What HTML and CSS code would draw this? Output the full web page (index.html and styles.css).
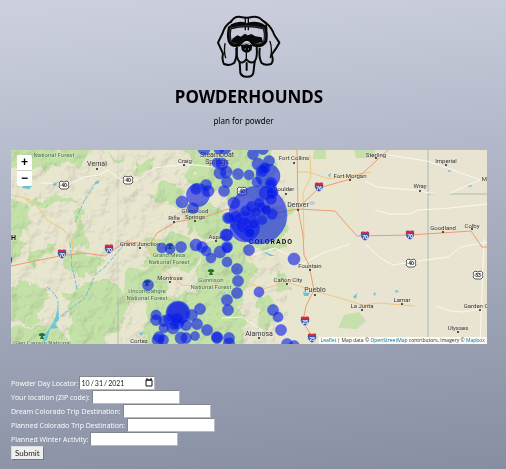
FILE: index.html
```html
<!DOCTYPE html>
<html lang="en">
<head>
<meta charset="utf-8">
<meta name="viewport" content="width=device-width, initial-scale=1">
<title>Powderhounds</title>
<link rel="stylesheet" href="styles.css">
</head>
<body>
<header class="masthead">
  <svg class="logo" viewBox="0 0 255 240" role="img" aria-label="Hound wearing ski goggles">
    <g fill="none" stroke="#080808" stroke-width="6" stroke-linecap="round" stroke-linejoin="round">
      <path d="M78 50Q90 32 107 36Q125 40 141 36Q160 33 172 46L184 55Q200 68 208 90L223 113Q213 132 200 149Q207 169 198 177Q180 183 169 173Q161 157 164 131"/>
      <path d="M78 50Q60 61 53 84L39 113L54 146Q50 164 57 177Q75 184 88 173Q97 154 94 131"/>
      <path d="M60 116Q56 142 62 158M195 109Q203 134 196 158" stroke-width="4"/>
      <path d="M96 128Q92 158 103 170Q113 178 124 163Q137 178 149 169Q158 157 155 128"/>
      <path d="M104 172L106 204Q111 216 126 215Q142 216 145 204L149 170M125 174V195"/>
      <path d="M124 145V164M121 39V74M130 39V74" stroke-width="4"/>
      <path d="M80 61Q101 49 121 56M130 56Q157 49 177 63" stroke-width="7"/>
      <path d="M75 68Q125 54 178 68Q185 84 181 108Q170 126 147 119Q137 101 125 101Q112 102 102 119Q82 124 74 108Q69 86 75 68Z" stroke-width="12"/>
      <path d="M76 69Q125 56 177 69Q183 86 178 107Q166 121 149 114Q137 96 125 97Q112 98 101 114Q84 120 76 107Q72 88 76 69Z" stroke="#8a8e99" stroke-width="1"/>
    </g>
    <path fill="#080808" d="M172 44L184 51L188 75L177 66L182 59ZM82 101L97 91L108 95L119 86L128 91L139 87L151 94L170 97L174 110L150 116L136 101L117 100L100 116L80 112ZM108 121Q125 108 142 121L140 134Q125 153 110 135Z"/>
    <path fill="none" stroke="#b9beca" stroke-width="3" d="M108 92L121 83L130 88L138 85M115 119Q125 112 135 119M119 132H122M129 132H132"/>
  </svg>
  <h1 class="brand">POWDERHOUNDS</h1>
  <p class="tagline">plan for powder</p>
</header>

<main class="content">
  <section class="map" aria-label="Colorado snow map">
    <svg class="map-canvas" viewBox="11 150 476 194" preserveAspectRatio="xMidYMid slice">
      <defs>
        <filter id="rough" x="-10%" y="-10%" width="120%" height="120%" color-interpolation-filters="sRGB">
          <feTurbulence type="fractalNoise" baseFrequency="0.06" numOctaves="4" seed="8" result="n"/>
          <feDisplacementMap in="SourceGraphic" in2="n" scale="22" xChannelSelector="R" yChannelSelector="G"/>
        </filter>
        <filter id="relief" x="0" y="0" width="100%" height="100%" color-interpolation-filters="sRGB">
          <feTurbulence type="fractalNoise" baseFrequency="0.07" numOctaves="4" seed="3" result="n"/>
          <feDiffuseLighting in="n" surfaceScale="4" diffuseConstant="1.3" lighting-color="#fff" result="l"><feDistantLight azimuth="225" elevation="50"/></feDiffuseLighting>
          <feComposite in="l" in2="SourceGraphic" operator="in"/>
        </filter>
        <g id="interstate">
          <path d="M-4-4Q-2-5 0-4Q2-5 4-4Q6 2 0 5Q-6 2-4-4Z" fill="#3c50a4" stroke="#e9e8ed" stroke-width=".6"/>
          <path d="M-4-4Q-2-5 0-4Q2-5 4-4L4-2H-4Z" fill="#d22c37"/>
        </g>
        <path id="shield" d="M-3-4L0-3L3-4L5-2Q3 0 5 2L3 4H-3L-5 2Q-3 0-5-2Z" fill="#fff" stroke="#333" stroke-width=".8"/>
        <path id="tree" d="M-1 0Q-4 0-3-2Q0-4 3-2Q4 0 1 0L2 3H-2Z" fill="#23733a"/>
      </defs>
      <rect x="11" y="150" width="476" height="194" fill="#e9e6d0"/>
      <path d="M360 150H487V344H350Z" fill="#e9e2d3" opacity=".6"/>
      <g fill="#c4e1a8" filter="url(#rough)">
        <path d="M5 145H95L80 165L60 162L45 172L30 170L5 165ZM25 202L45 196L78 198L68 205L32 206ZM5 195L24 206L30 228L22 250L5 262ZM75 212L86 220L84 245L72 252ZM38 247L58 240L48 258L36 268L26 262ZM60 258L90 252L104 262L85 277L62 270ZM5 285L45 282L48 304L32 322L5 325ZM64 292L98 278L126 288L128 315L104 350H60L75 320ZM5 330L52 320L70 350H5Z"/>
        <path d="M135 158L150 154L152 172L138 176ZM182 145H272L276 175L264 192L234 204L218 190L196 194L188 170ZM150 196L166 180L184 190L178 206ZM182 204L216 201L236 220L226 240L190 233ZM145 240L192 236L208 252L186 272L148 268ZM208 240L248 238L254 265L244 300L228 316L202 302L194 274ZM126 270L160 266L172 290L153 306L128 302ZM156 300L216 286L244 313L236 350H146L142 322Z"/>
        <path d="M105 156L124 155L120 161ZM250 200L287 208L285 245L268 252L250 242ZM258 290L270 298L278 317L268 326ZM275 272L286 276L288 290L278 294Z"/>
      </g>
      <g fill="#c7dfad">
        <path d="M314 150H326V159H313ZM354 150H375V158H356ZM259 312H268V329H257ZM344 315L359 312L366 321L357 329L338 328Z"/>
      </g>
      <path class="relief" d="M11 150H285L288 344H11Z" filter="url(#relief)"/>
      <g fill="none" stroke="#abb9b4" stroke-width="1">
        <path d="M118 296V344"/><path d="M118 150V296" stroke-opacity=".3"/><path d="M428 150V344M428 194H487"/>
      </g>
      <g fill="none" stroke="#faf7ef" stroke-width="1">
        <path d="M41 183L70 184L84 177L99 175L108 170L121 180H137L155 168L184 164L215 167L238 178"/>
        <path d="M365 181L377 187L414 190L435 194H449L461 188L480 180L453 170L427 161L388 155"/>
        <path d="M375 210L390 214H410L418 210L450 208L487 204M365 244L380 258L393 265L411 262L448 257L461 247L487 242M484 239L480 344M436 306L450 311L464 312L480 309"/>
        <path d="M300 265L325 252L350 244M252 255L275 248L291 256M222 318L242 317L262 330"/>
      </g>
      <g fill="none" stroke="#efc784" stroke-width="1">
        <path d="M11 195L29 199L38 207L47 220L63 229L72 240L73 252M240 279L263 289L287 282L314 291L340 298L362 305L379 303L415 306M297 172H308L330 179L371 172M310 155L311 176L303 193L304 238M145 243L160 266L182 285L220 287M240 244L253 261"/>
      </g>
      <g fill="none" stroke="#ed9b72" stroke-width="1">
        <path d="M11 266L30 262L60 256L84 253L105 256L125 242L150 244L157 233L176 222L205 217L228 209M228 209L267 215L298 209L335 211L348 226L357 236L410 235L471 231L482 247L487 247M297 150L298 209L303 235L304 255L309 265L314 290L306 306L303 322L313 338M298 208L319 188L347 180L363 173L377 160L388 150"/>
      </g>
      <g fill="none" stroke="#66bfd7" stroke-width="1" stroke-dasharray="5 2 3 1">
        <path d="M71 263L74 275L77 289M128 240L105 267L95 275L85 298L73 307L58 319M47 287L54 293L58 300L58 322M70 243L72 263M97 181L84 201L75 222M225 292L220 299"/>
      </g>
      <path d="M58 307L59 319L55 324L58 328L50 329L47 340L42 343L46 333L54 322Z" fill="#6bc5e0"/>
      <path d="M23 186H32L29 189L22 188ZM52 184L58 182L55 186ZM94 183L100 180L98 184ZM303 292L310 293L308 296H304ZM448 170L452 171L448 172ZM467 186L472 185L471 187ZM373 294L376 292L375 296ZM395 290L399 291L396 293ZM328 175L331 173L330 178ZM262 251L275 256L270 256ZM353 297L357 293L356 299ZM139 333L144 332L141 336Z" fill="#68c3d7"/>
      <ellipse cx="312" cy="203" rx="3" ry="2" fill="#c6c8df"/>

      <g class="towns">
        <text class="city" x="97" y="166">Vernal</text><text x="185" y="163">Craig</text><text class="city" x="217" y="157">Steamboat</text><text class="city" x="217" y="164">Springs</text>
        <text x="294" y="160">Fort Collins</text><text x="284" y="191">Boulder</text><text class="city" x="298" y="207">Denver</text><text x="350" y="178">Fort Morgan</text>
        <text x="376" y="157">Sterling</text><text x="446" y="163">Imperial</text><text x="420" y="188">Wray</text><text x="486" y="181">Mc</text>
        <text x="443" y="230">Goodland</text><text x="472" y="228">Colby</text><text x="174" y="220">Rifle</text><text x="195" y="213">Glenwood</text><text x="195" y="219">Springs</text>
        <text x="217" y="239">Aspen</text><text x="140" y="246">Grand Junction</text><text x="170" y="280">Montrose</text><text x="310" y="268">Fountain</text>
        <text x="288" y="282">Cañon City</text><text class="city" x="315" y="292">Pueblo</text><text x="362" y="308">La Junta</text><text x="402" y="302">Lamar</text>
        <text x="476" y="308">Garden C</text><text x="458" y="330">Ulysses</text><text class="city" x="259" y="336">Alamosa</text><text x="139" y="343">Cortez</text>
        <text class="state" x="271" y="244">COLORADO</text><text class="state" x="14" y="240">H</text>
      </g>
      <g class="forests">
        <text x="54" y="157">National Forest</text><text x="169" y="257">Grand Mesa</text><text x="169" y="264">National Forest</text>
        <text x="211" y="282">Gunnison</text><text x="211" y="289">National Forest</text><text x="147" y="293">Uncompahgre</text><text x="147" y="300">National Forest</text><text x="42" y="345">Glen Canyon National</text>
      </g>
      <g fill="#222">
        <circle cx="97" cy="169" r="1"/><circle cx="184" cy="165" r="1"/><circle cx="294" cy="163" r="1"/><circle cx="286" cy="194" r="1"/><circle cx="298" cy="210" r="1"/><circle cx="350" cy="180" r="1"/><circle cx="376" cy="158" r="1"/><circle cx="446" cy="165" r="1"/><circle cx="420" cy="191" r="1"/><circle cx="443" cy="232" r="1"/><circle cx="472" cy="229" r="1"/><circle cx="174" cy="222" r="1"/><circle cx="195" cy="221" r="1"/><circle cx="216" cy="241" r="1"/><circle cx="140" cy="248" r="1"/><circle cx="170" cy="282" r="1"/><circle cx="310" cy="270" r="1"/><circle cx="287" cy="284" r="1"/><circle cx="315" cy="295" r="1"/><circle cx="362" cy="310" r="1"/><circle cx="402" cy="304" r="1"/><circle cx="480" cy="310" r="1"/><circle cx="458" cy="332" r="1"/><circle cx="259" cy="338" r="1"/>
      </g>
      <use href="#tree" x="170" y="246"/><use href="#tree" x="211" y="272"/><use href="#tree" x="147" y="283"/><use href="#tree" x="42" y="336"/>
      <use href="#shield" x="64" y="185"/><use href="#shield" x="128" y="180"/><use href="#shield" x="242" y="191"/><use href="#shield" x="411" y="263"/><use href="#shield" x="478" y="275"/>
      <use href="#interstate" x="62" y="254"/><use href="#interstate" x="109" y="249"/><use href="#interstate" x="8" y="261"/><use href="#interstate" x="319" y="187"/><use href="#interstate" x="365" y="236"/><use href="#interstate" x="410" y="235"/><use href="#interstate" x="305" y="321"/><use href="#interstate" x="312" y="338"/><use href="#interstate" x="266" y="210"/>
      <g class="routes">
        <text x="64" y="187">40</text><text x="128" y="182">40</text><text x="242" y="193">40</text><text x="411" y="265">40</text><text x="478" y="277">83</text>
        <g fill="#fff"><text x="62" y="257">70</text><text x="109" y="252">70</text><text x="319" y="190">76</text><text x="365" y="239">70</text><text x="410" y="238">70</text><text x="305" y="324">25</text><text x="312" y="341">25</text></g>
      </g>

      <g class="snow">
        <circle cx="258" cy="215" r="29"/><circle cx="245" cy="227" r="15"/><circle cx="268" cy="176" r="12"/><circle cx="198" cy="195" r="11.500"/><circle cx="178" cy="313" r="12"/>
        <circle cx="204" cy="149" r="6"/><circle cx="219" cy="149" r="5"/><circle cx="225" cy="148" r="6"/><circle cx="222" cy="164" r="6"/><circle cx="217" cy="163" r="5"/><circle cx="220" cy="173" r="6"/><circle cx="226" cy="172" r="6"/><circle cx="238" cy="174" r="5.500"/><circle cx="249" cy="175" r="5"/><circle cx="227" cy="182" r="5.500"/><circle cx="224" cy="191" r="5.500"/><circle cx="196" cy="189" r="5.500"/><circle cx="206" cy="185" r="5.500"/><circle cx="208" cy="191" r="6"/><circle cx="182" cy="202" r="6"/><circle cx="193" cy="208" r="5.500"/><circle cx="234" cy="203" r="6"/><circle cx="228" cy="218" r="5.500"/><circle cx="229" cy="218" r="5"/><circle cx="236" cy="217" r="6"/><circle cx="226" cy="235" r="6"/><circle cx="227" cy="235" r="6"/>
        <circle cx="253" cy="154" r="5.500"/><circle cx="263" cy="149" r="5.500"/><circle cx="269" cy="161" r="5.500"/><circle cx="258" cy="164" r="6"/><circle cx="262" cy="171" r="6"/><circle cx="263" cy="170" r="5"/><circle cx="265" cy="168" r="5.500"/><circle cx="257" cy="182" r="5"/><circle cx="271" cy="183" r="6"/><circle cx="271" cy="184" r="5"/><circle cx="266" cy="193" r="7"/><circle cx="272" cy="192" r="6"/><circle cx="272" cy="193" r="5.500"/><circle cx="271" cy="199" r="5.500"/><circle cx="246" cy="211" r="5.500"/><circle cx="252" cy="207" r="6"/><circle cx="259" cy="203" r="5"/><circle cx="261" cy="207" r="5"/><circle cx="266" cy="210" r="5"/><circle cx="272" cy="214" r="5.500"/><circle cx="262" cy="220" r="5"/><circle cx="256" cy="212" r="5"/><circle cx="244" cy="225" r="8"/><circle cx="249" cy="231" r="6"/><circle cx="250" cy="233" r="5"/><circle cx="254" cy="224" r="5"/>
        <circle cx="162" cy="248" r="5"/><circle cx="170" cy="249" r="5"/><circle cx="181" cy="247" r="5.500"/><circle cx="196" cy="245" r="6"/><circle cx="202" cy="247" r="5.500"/><circle cx="206" cy="251" r="5"/><circle cx="211" cy="258" r="5"/><circle cx="220" cy="252" r="6"/><circle cx="227" cy="247" r="5.500"/><circle cx="227" cy="248" r="5"/><circle cx="227" cy="262" r="5"/><circle cx="237" cy="269" r="5.500"/><circle cx="238" cy="281" r="5.500"/><circle cx="237" cy="293" r="5.500"/><circle cx="227" cy="300" r="5.500"/><circle cx="228" cy="310" r="5.500"/><circle cx="148" cy="285" r="5.500"/><circle cx="200" cy="309" r="5.500"/><circle cx="192" cy="315" r="5.500"/><circle cx="156" cy="315" r="5"/><circle cx="156" cy="320" r="5.500"/><circle cx="164" cy="321" r="5.500"/><circle cx="169" cy="319" r="5.500"/><circle cx="177" cy="319" r="6"/><circle cx="178" cy="323" r="6"/><circle cx="173" cy="328" r="6"/><circle cx="164" cy="328" r="5"/><circle cx="174" cy="325" r="5"/><circle cx="178" cy="313" r="11"/><circle cx="186" cy="325" r="5.500"/><circle cx="197" cy="324" r="5.500"/><circle cx="207" cy="330" r="5.500"/><circle cx="159" cy="337" r="5.500"/><circle cx="158" cy="340" r="6"/><circle cx="163" cy="340" r="5.500"/><circle cx="181" cy="338" r="6"/><circle cx="186" cy="338" r="5.500"/><circle cx="195" cy="336" r="4.500"/><circle cx="217" cy="338" r="5.500"/><circle cx="217" cy="337" r="5.500"/><circle cx="229" cy="338" r="5.500"/><circle cx="229" cy="343" r="5.500"/>
        <circle cx="249" cy="250" r="5.500"/><circle cx="294" cy="259" r="6"/><circle cx="259" cy="292" r="5"/><circle cx="273" cy="310" r="5.500"/><circle cx="278" cy="317" r="5"/><circle cx="281" cy="330" r="5.500"/><circle cx="287" cy="344" r="5.500"/><circle cx="294" cy="346" r="5.500"/>
      </g>
    </svg>
    <div class="zoom">
      <button type="button" aria-label="Zoom in">+</button>
      <button type="button" aria-label="Zoom out">−</button>
    </div>
    <div class="attribution"><a href="#leaflet">Leaflet</a> | Map data © <a href="#osm">OpenStreetMap</a> contributors, Imagery © <a href="#mapbox">Mapbox</a></div>
  </section>

  <form class="planner">
    <div class="row"><label for="day">Powder Day Locator:</label><span class="date-box"><input class="date" id="day" type="date" value="2021-10-31"><svg class="calendar" viewBox="0 0 8 9" aria-hidden="true"><path d="M1 2H7V8H1Z" fill="none" stroke="#111"/><path d="M1 2H7M2 0V2M6 0V2" fill="none" stroke="#111"/></svg></span></div>
    <div class="row"><label for="zip">Your location (ZIP code):</label> <input class="field" id="zip" type="text"></div>
    <div class="row"><label for="dream">Dream Colorado Trip Destination:</label> <input class="field" id="dream" type="text"></div>
    <div class="row"><label for="planned">Planned Colorado Trip Destination:</label> <input class="field" id="planned" type="text"></div>
    <div class="row"><label for="activity">Planned Winter Activity:</label> <input class="field" id="activity" type="text"></div>
    <div class="row"><button class="submit" type="submit">Submit</button></div>
  </form>
</main>
</body>
</html>
```
FILE: styles.css
```css
* { box-sizing: border-box; }
html { min-height: 100%; background: linear-gradient(175deg, #cdd1df 0%, #a9afc1 50%, #868ea1 100%); }
body { margin: 0; font-family: "Open Sans", Lato, sans-serif; font-size: 7px; color: #fff; }

.masthead { display: flex; flex-direction: column; align-items: center; padding: 5px 19px 0 11px; color: #000; font-family: "Noto Sans", "Open Sans", sans-serif; }
.logo { width: 85px; height: 80px; margin-right: 4px; }
.brand { margin: 0; font-size: 17px; line-height: 24px; font-weight: 700; }
.tagline { margin: 6px 11px 0 0; font-size: 8px; line-height: 12px; }

.content { padding: 23px 19px 8px 11px; }
.map { position: relative; overflow: hidden; }
.map-canvas { display: block; width: 100%; height: auto; font-family: Roboto, sans-serif; text-anchor: middle; }
.relief { opacity: .14; mix-blend-mode: multiply; }
.towns { font-size: 6px; fill: #35363a; }
.towns text, .forests text { paint-order: stroke; stroke: #eeead9; stroke-width: 1px; stroke-opacity: .6; }
.towns .city { font-size: 7px; }
.towns .state { font-size: 7px; font-weight: 700; letter-spacing: 1px; fill: #111; }
.forests { font-size: 6px; fill: #3f7346; }
.routes { font-size: 5px; font-weight: 700; fill: #222; }
.snow { fill: #0a18e8; fill-opacity: .6; stroke: #2453ee; stroke-opacity: .5; stroke-width: 1px; }

.zoom { position: absolute; top: 5px; left: 6px; display: flex; flex-direction: column; gap: 1px; width: 15px; border-radius: 2px; overflow: hidden; background: #ccc; }
.zoom button { height: 15px; padding: 0; border: 0; background: #fff; color: #000; font: 700 12px/15px "Liberation Sans", sans-serif; }
.attribution { position: absolute; right: 0; bottom: 0; padding: 0 2px; background: rgba(255, 255, 255, .8); color: #333; font: 5px/7px "Open Sans", sans-serif; }
.attribution a { color: #0078a8; text-decoration: none; }

.planner { display: flex; flex-direction: column; margin-top: 32px; }
.row { display: flex; align-items: center; gap: 2px; height: 14px; }
.row:first-child { gap: 0; }
.field, .date { height: 14px; margin: 0; padding: 1px; border: 1px solid #83868e; border-right-color: #b9bbc0; border-bottom-color: #b9bbc0; background: #fff; font: 8px Lato, sans-serif; color: #222; }
.field { width: 88px; }
.date-box { position: relative; display: flex; }
.date { width: 76px; font-size: 7px; }
.date::-webkit-calendar-picker-indicator { opacity: 0; width: 8px; height: 8px; margin: 0; padding: 0; }
.date::-webkit-datetime-edit, .date::-webkit-datetime-edit-fields-wrapper { padding: 0; }
.calendar { position: absolute; right: 2px; top: 2px; width: 8px; height: 9px; pointer-events: none; }
.submit { height: 14px; padding: 0 3px; border: 1px solid #999; border-color: #ddd #777 #777 #ddd; background: #efefef; color: #222; font: 8px Lato, sans-serif; }
```
